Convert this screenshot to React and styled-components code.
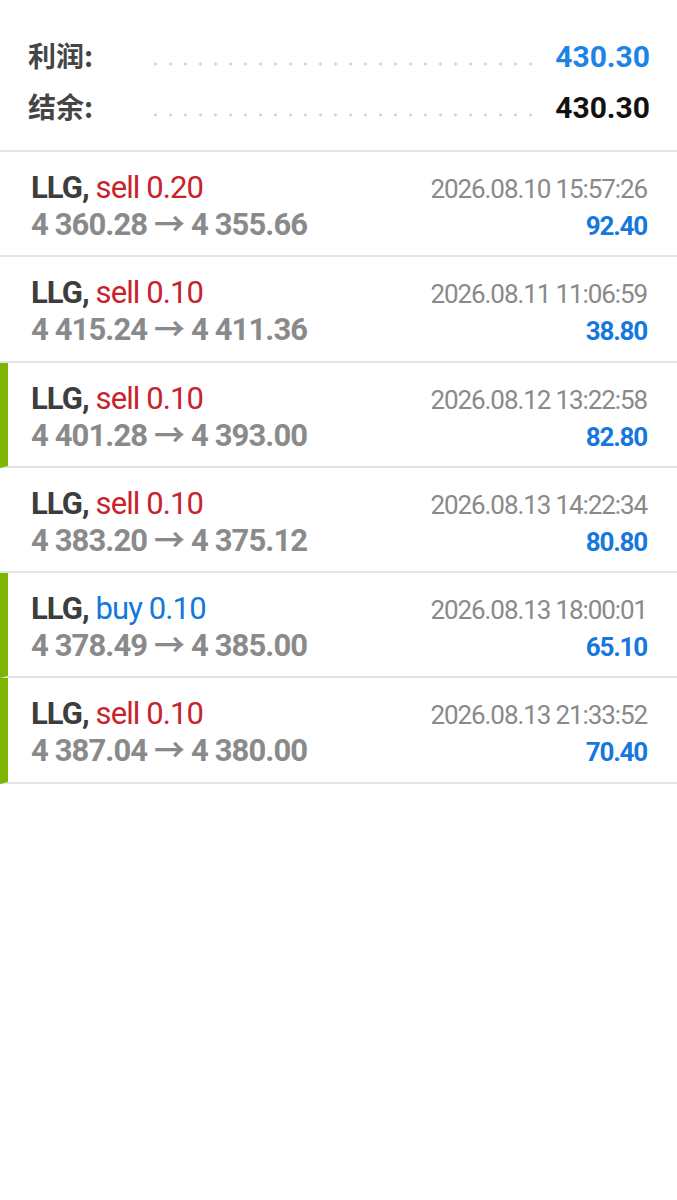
import React from "react";
import styled, {createGlobalStyle} from "styled-components";

const GlobalStyle = createGlobalStyle`
  html, body {
    margin: 0;
    padding: 0;
    background: #ffffff;
  }
  body {
    font-family: Roboto, "Noto Sans", "Noto Sans CJK SC", sans-serif;
  }
`;

const summary = [
    {label: "利润:", value: "430.30", color: "#1d84e6"},
    {label: "结余:", value: "430.30", color: "#111111"}
];

const trades = [
    {symbol: "LLG", side: "sell", volume: "0.20", open: "4 360.28", close: "4 355.66", time: "2026.08.10 15:57:26", profit: "92.40", marked: false},
    {symbol: "LLG", side: "sell", volume: "0.10", open: "4 415.24", close: "4 411.36", time: "2026.08.11 11:06:59", profit: "38.80", marked: false},
    {symbol: "LLG", side: "sell", volume: "0.10", open: "4 401.28", close: "4 393.00", time: "2026.08.12 13:22:58", profit: "82.80", marked: true},
    {symbol: "LLG", side: "sell", volume: "0.10", open: "4 383.20", close: "4 375.12", time: "2026.08.13 14:22:34", profit: "80.80", marked: false},
    {symbol: "LLG", side: "buy", volume: "0.10", open: "4 378.49", close: "4 385.00", time: "2026.08.13 18:00:01", profit: "65.10", marked: true},
    {symbol: "LLG", side: "sell", volume: "0.10", open: "4 387.04", close: "4 380.00", time: "2026.08.13 21:33:52", profit: "70.40", marked: true}
];

const Page = styled.div`
  width: 677px;
  min-height: 1200px;
  background: #ffffff;
`;

const Summary = styled.div`
  padding: 31px 27px 17px 28px;
  border-bottom: 2px solid #e4e4e4;
`;

const SummaryRow = styled.div`
  display: flex;
  align-items: center;
  height: 51px;
`;

const Label = styled.span`
  width: 126px;
  margin-top: -4px;
  font-family: "Noto Sans CJK SC", "Noto Sans", sans-serif;
  font-size: 28px;
  font-weight: 700;
  color: #454545;
`;

const Leader = styled.span`
  flex: 1;
  height: 4px;
  margin: 14px 20px 0 0;
  background-image: radial-gradient(circle, #d6d6d6 1.4px, transparent 1.8px);
  background-size: 15px 4px;
  background-repeat: repeat-x;
  background-position: -6px 0;
`;

const Value = styled.span`
  font-family: Roboto, sans-serif;
  font-size: 30px;
  font-weight: 700;
  color: ${p => p.color};
`;

const TradeRow = styled.div`
  display: grid;
  grid-template-columns: 1fr auto;
  grid-template-rows: 37px 37px;
  align-items: baseline;
  height: 105.3px;
  box-sizing: border-box;
  padding: 17px 30px 0 ${p => (p.marked ? 23 : 31)}px;
  border-left: ${p => (p.marked ? "8px solid #7db500" : "none")};
  border-bottom: 2px solid #e4e4e4;
  line-height: 37px;
`;

const Title = styled.div`
  font-size: 31px;
  letter-spacing: -0.9px;
  color: #3d3d3d;
  white-space: nowrap;
`;

const Symbol = styled.span`
  font-weight: 700;
`;

const Side = styled.span`
  color: ${p => (p.side === "buy" ? "#1378dc" : "#c8232c")};
`;

const Prices = styled.div`
  font-size: 31px;
  font-weight: 700;
  letter-spacing: -0.9px;
  color: #8a8a8a;
  white-space: nowrap;
`;

const Time = styled.div`
  font-size: 26px;
  letter-spacing: -1.1px;
  color: #8a8a8a;
  text-align: right;
  white-space: nowrap;
`;

const Profit = styled.div`
  font-size: 26px;
  font-weight: 700;
  letter-spacing: -1.2px;
  color: #1678dc;
  text-align: right;
`;

const App = () => (
    <Page>
        <GlobalStyle/>
        <Summary>
            {summary.map(item => (
                <SummaryRow key={item.label}>
                    <Label>{item.label}</Label>
                    <Leader/>
                    <Value color={item.color}>{item.value}</Value>
                </SummaryRow>
            ))}
        </Summary>
        {trades.map(t => (
            <TradeRow key={t.time} marked={t.marked}>
                <Title>
                    <Symbol>{t.symbol},</Symbol> <Side side={t.side}>{t.side} {t.volume}</Side>
                </Title>
                <Time>{t.time}</Time>
                <Prices>{t.open} → {t.close}</Prices>
                <Profit>{t.profit}</Profit>
            </TradeRow>
        ))}
    </Page>
);

export default App;
